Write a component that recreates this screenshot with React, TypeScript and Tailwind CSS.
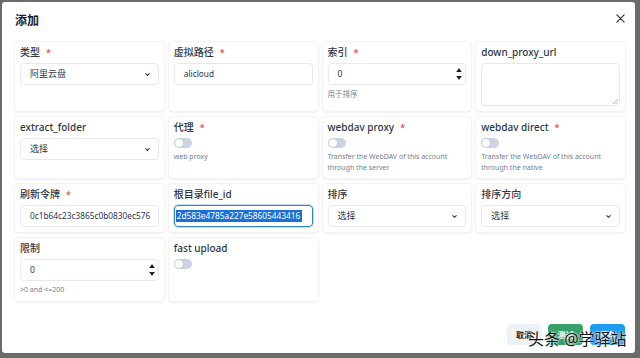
import { ReactNode } from "react";

const font = { fontFamily: '"Noto Sans", "Noto Sans CJK SC", sans-serif' };

function Label({ text, required }: { text: string; required?: boolean }) {
  return (
    <div className="text-[10px] leading-[11px] font-medium text-[#2d3748] mb-[5px] flex items-center">
      <span>{text}</span>
      {required && <span className="text-[#e53e3e] ml-[6px] text-[9px]">*</span>}
    </div>
  );
}

function Card({ children }: { children: ReactNode }) {
  return (
    <div className="bg-white rounded-[4px] p-[5px] shadow-[0_0_0_1px_#f1f3f6,0_1px_3px_rgba(0,0,0,0.12)]">
      {children}
    </div>
  );
}

function Chevron() {
  return (
    <svg width="7" height="7" viewBox="0 0 24 24" fill="none" stroke="#2d3748" strokeWidth="3.5" strokeLinecap="round" strokeLinejoin="round">
      <path d="M6 9l6 6 6-6" />
    </svg>
  );
}

function Select({ value }: { value: string }) {
  return (
    <div className="h-[22px] border border-[#e6eaf0] rounded-[4px] flex items-center justify-between pl-[9px] pr-[7px] text-[9px] text-[#2d3748]">
      <span>{value}</span>
      <Chevron />
    </div>
  );
}

function Input({ value }: { value: string }) {
  return (
    <div className="h-[22px] border border-[#e6eaf0] rounded-[4px] flex items-center pl-[9px] text-[8.3px] text-[#2d3748] overflow-hidden whitespace-nowrap">
      {value}
    </div>
  );
}

function NumberInput({ value }: { value: string }) {
  return (
    <div className="h-[22px] border border-[#e6eaf0] rounded-[4px] flex items-center justify-between pl-[9px] pr-[3px] text-[8.5px] text-[#2d3748]">
      <span>{value}</span>
      <div className="flex flex-col items-center gap-[4px]">
        <svg width="6" height="4" viewBox="0 0 7 5"><path d="M0 5 L3.5 0 L7 5 Z" fill="#1a202c" /></svg>
        <svg width="6" height="4" viewBox="0 0 7 5"><path d="M0 0 L3.5 5 L7 0 Z" fill="#1a202c" /></svg>
      </div>
    </div>
  );
}

function Switch() {
  return (
    <div className="w-[18px] h-[10px] rounded-full bg-[#cbd5e0] flex items-center px-[1px] mt-[4px]">
      <div className="w-[8px] h-[8px] rounded-full bg-white shadow-[0_0_1px_rgba(0,0,0,0.3)]" />
    </div>
  );
}

function Hint({ children, cjk }: { children: ReactNode; cjk?: boolean }) {
  return (
    <div className={`${cjk ? "text-[7.5px]" : "text-[7px]"} leading-[10.5px] text-[#718096] mt-[4px] whitespace-nowrap`}>
      {children}
    </div>
  );
}

export default function App() {
  return (
    <div className="w-[640px] h-[358px] bg-[#6b6b6b] pt-[2px] pl-[2px] overflow-hidden" style={font}>
      <div className="relative w-[633px] h-[351px] bg-white rounded-[3px] flex flex-col">
        <div className="flex items-center justify-between h-[40px] pl-[13px] pr-[10px]">
          <div className="text-[12px] font-bold text-[#1a202c] -mt-[2px]">添加</div>
          <svg width="9" height="9" viewBox="0 0 10 10" stroke="#2d3748" strokeWidth="1.4" strokeLinecap="round" className="-mt-[8px]">
            <path d="M1 1 L9 9 M9 1 L1 9" />
          </svg>
        </div>

        <div className="grid grid-cols-4 gap-x-[5px] gap-y-[6px] pl-[13px] pr-[10px] items-stretch">
          <Card>
            <Label text="类型" required />
            <Select value="阿里云盘" />
          </Card>
          <Card>
            <Label text="虚拟路径" required />
            <Input value="alicloud" />
          </Card>
          <Card>
            <Label text="索引" required />
            <NumberInput value="0" />
            <Hint cjk>用于排序</Hint>
          </Card>
          <Card>
            <Label text="down_proxy_url" />
            <div className="relative h-[43px] border border-[#e6eaf0] rounded-[4px]">
              <svg width="6" height="6" viewBox="0 0 6 6" className="absolute right-[1px] bottom-[1px]" stroke="#a0aec0" strokeWidth="0.8">
                <path d="M6 1 L1 6 M6 3.5 L3.5 6" />
              </svg>
            </div>
          </Card>

          <Card>
            <Label text="extract_folder" />
            <Select value="选择" />
          </Card>
          <Card>
            <Label text="代理" required />
            <Switch />
            <Hint>web proxy</Hint>
          </Card>
          <Card>
            <Label text="webdav proxy" required />
            <Switch />
            <Hint>
              Transfer the WebDAV of this account
              <br />
              through the server
            </Hint>
          </Card>
          <Card>
            <Label text="webdav direct" required />
            <Switch />
            <Hint>
              Transfer the WebDAV of this account
              <br />
              through the native
            </Hint>
          </Card>

          <Card>
            <Label text="刷新令牌" required />
            <Input value="0c1b64c23c3865c0b0830ec576" />
          </Card>
          <Card>
            <Label text="根目录file_id" />
            <div className="h-[22px] border border-[#3182ce] rounded-[4px] flex items-center pl-[4px] text-[8.3px] overflow-hidden whitespace-nowrap shadow-[0_0_0_1px_rgba(49,130,206,0.25)]">
              <span className="bg-[#1a6fd8] text-white -ml-[3px] pl-[1px] pr-[2px]">2d583e4785a227e58605443416</span>
            </div>
          </Card>
          <Card>
            <Label text="排序" />
            <Select value="选择" />
          </Card>
          <Card>
            <Label text="排序方向" />
            <Select value="选择" />
          </Card>

          <Card>
            <Label text="限制" />
            <NumberInput value="0" />
            <Hint>&gt;0 and &lt;=200</Hint>
          </Card>
          <Card>
            <Label text="fast upload" />
            <Switch />
          </Card>
        </div>

        <div className="mt-auto flex justify-end gap-[7px] pr-[10px] pb-[8px]">
          <button className="w-[34px] h-[21px] rounded-[4px] bg-[#edf2f7] text-[8px] font-semibold text-[#1a202c]">取消</button>
          <button className="w-[35px] h-[21px] rounded-[4px] bg-[#38a169] text-[8px] font-semibold text-white">测试</button>
          <button className="w-[35px] h-[21px] rounded-[4px] bg-[#1f9cf0] text-[8px] font-semibold text-white">保存</button>
        </div>

        <div className="absolute left-[526px] top-[327px] text-[16px] leading-[20px] text-[#111] [text-shadow:0_0_2px_#fff,0_0_2px_#fff]">
          头条 @学驿站
        </div>
      </div>
    </div>
  );
}
